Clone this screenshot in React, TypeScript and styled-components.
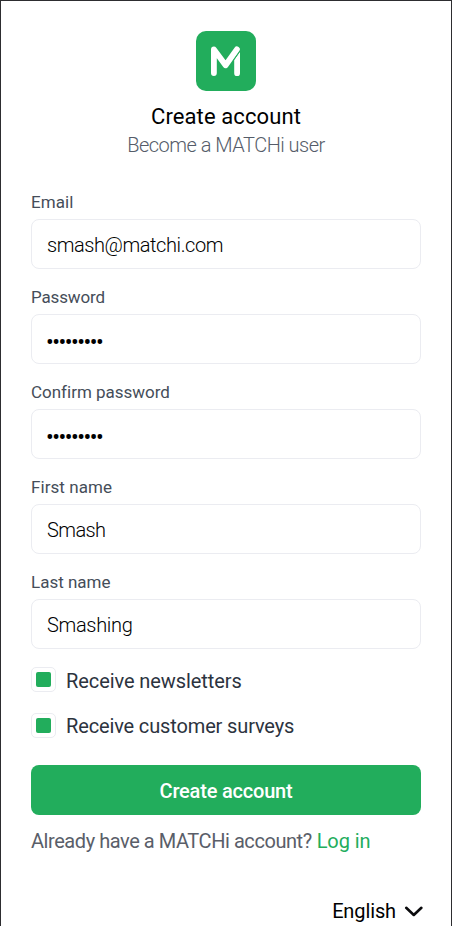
import React, { useState } from 'react';
import styled, { createGlobalStyle } from 'styled-components';

const GlobalStyle = createGlobalStyle`
  *, *::before, *::after { box-sizing: border-box; }
  html, body { margin: 0; padding: 0; overflow: hidden; }
  body { background: #fff; font-family: Roboto, "Liberation Sans", sans-serif; }
`;

const Page = styled.main`
  display: flex;
  flex-direction: column;
  width: 452px;
  height: 926px;
  padding: 30px 30px 0;
  border: 1px solid #2d2d30;
  border-bottom: 0;
  background: #fff;
`;

const Header = styled.header`
  display: flex;
  flex-direction: column;
  align-items: center;
  margin-bottom: 31px;
`;

const Logo = styled.svg`
  display: block;
  width: 60px;
  height: 60px;
  margin-bottom: 11px;
`;

const Title = styled.h1`
  margin: 0 0 -1px;
  font-size: 22px;
  font-weight: 400;
  line-height: 30px;
  letter-spacing: 0.1px;
  color: #000;
`;

const Subtitle = styled.p`
  margin: 0;
  font-size: 20px;
  font-weight: 300;
  line-height: 28px;
  letter-spacing: -0.51px;
  color: #555c69;
`;

const Form = styled.form`
  display: flex;
  flex-direction: column;
`;

const Fields = styled.div`
  display: flex;
  flex-direction: column;
  gap: 16px;
`;

const Field = styled.label`
  display: flex;
  flex-direction: column;
  gap: 5px;
`;

const FieldLabel = styled.span<{ $tracking: number }>`
  font-size: 17px;
  line-height: 24px;
  letter-spacing: ${p => p.$tracking}px;
  color: #454d59;
`;

const Input = styled.input<{ $tracking: number }>`
  width: 100%;
  height: 50px;
  padding: 2px 15px 0;
  border: 1px solid #ebecf1;
  border-radius: 8px;
  outline: none;
  background: #fff;
  color: #000;
  font-family: inherit;
  font-size: 20px;
  font-weight: 300;
  letter-spacing: ${p => p.$tracking}px;

  &[type='password'] {
    padding-top: 7px;
    padding-left: 14px;
    font-size: 23px;
    font-weight: 400;
  }
`;

const Checks = styled.div`
  display: flex;
  flex-direction: column;
  gap: 21px;
  margin: 18px 0 27px;
`;

const CheckRow = styled.label`
  display: flex;
  align-items: flex-start;
  gap: 10px;
  height: 25px;
`;

const CheckBox = styled.input`
  appearance: none;
  display: grid;
  place-items: center;
  width: 25px;
  height: 25px;
  margin: 0;
  border: 1px solid #ebecf1;
  border-radius: 5px;
  background: #fff;

  &:checked::before {
    content: '';
    width: 15px;
    height: 15px;
    border-radius: 2px;
    background: #22ad5c;
  }
`;

const CheckLabel = styled.span<{ $tracking: number; $drop: number }>`
  padding-top: ${p => p.$drop}px;
  font-size: 20px;
  line-height: 25px;
  letter-spacing: ${p => p.$tracking}px;
  color: #2c333e;
`;

const Submit = styled.button`
  height: 50px;
  padding: 2px 0 0;
  border: 0;
  border-radius: 8px;
  background: #22ad5c;
  color: #fff;
  font-family: inherit;
  font-size: 20px;
  font-weight: 500;
  letter-spacing: -0.2px;
`;

const LoginLine = styled.p`
  display: flex;
  gap: 5px;
  margin: 12px 0 42px;
  font-size: 20px;
  line-height: 28px;
  letter-spacing: -0.44px;
  color: #5a5e69;
`;

const LoginLink = styled.a`
  letter-spacing: -0.1px;
  color: #22ad5c;
`;

const Language = styled.button`
  display: flex;
  align-items: center;
  align-self: flex-end;
  gap: 8px;
  height: 28px;
  margin-right: -3px;
  padding: 0;
  border: 0;
  background: none;
  color: #000;
  font-family: inherit;
  font-size: 20px;
  line-height: 28px;
  letter-spacing: -0.12px;
`;

const Chevron = styled.svg`
  display: block;
  width: 20px;
  height: 20px;
`;

const fields = [
  { label: 'Email', type: 'text', value: 'smash@matchi.com', labelTracking: 0.1, tracking: -0.42 },
  { label: 'Password', type: 'password', value: 'smashing1', labelTracking: -0.16, tracking: -1.5 },
  { label: 'Confirm password', type: 'password', value: 'smashing1', labelTracking: -0.01, tracking: -1.5 },
  { label: 'First name', type: 'text', value: 'Smash', labelTracking: 0.07, tracking: -0.6 },
  { label: 'Last name', type: 'text', value: 'Smashing', labelTracking: 0, tracking: -0.32 },
];

const checks = [
  { label: 'Receive newsletters', tracking: -0.08, drop: 2 },
  { label: 'Receive customer surveys', tracking: -0.14, drop: 1 },
];

function TextField({ field }: { field: (typeof fields)[number] }) {
  const [value, setValue] = useState(field.value);
  return (
    <Field>
      <FieldLabel $tracking={field.labelTracking}>{field.label}</FieldLabel>
      <Input
        type={field.type}
        value={value}
        onChange={e => setValue(e.target.value)}
        spellCheck={false}
        $tracking={field.tracking}
      />
    </Field>
  );
}

export default function App() {
  return (
    <>
      <GlobalStyle />
      <Page>
        <Header>
          <Logo viewBox="0 0 60 60" aria-hidden="true">
            <rect width="60" height="60" rx="10" fill="#22ad5c" />
            <path
              d="M17.9 42.1V18.4L29.6 34.3L40.9 18.4"
              fill="none"
              stroke="#fff"
              strokeWidth="5.8"
              strokeLinecap="round"
              strokeLinejoin="round"
            />
            <path d="M44 20.8V42.2a2.9 2.9 0 0 1-5.8 0V29Z" fill="#fff" />
            <path d="M44.6 19.3L37.4 29.4" stroke="#22ad5c" strokeWidth="0.8" />
          </Logo>
          <Title>Create account</Title>
          <Subtitle>Become a MATCHi user</Subtitle>
        </Header>
        <Form onSubmit={e => e.preventDefault()}>
          <Fields>
            {fields.map(field => (
              <TextField key={field.label} field={field} />
            ))}
          </Fields>
          <Checks>
            {checks.map(check => (
              <CheckRow key={check.label}>
                <CheckBox type="checkbox" defaultChecked />
                <CheckLabel $tracking={check.tracking} $drop={check.drop}>
                  {check.label}
                </CheckLabel>
              </CheckRow>
            ))}
          </Checks>
          <Submit type="submit">Create account</Submit>
        </Form>
        <LoginLine>
          Already have a MATCHi account?
          <LoginLink>Log in</LoginLink>
        </LoginLine>
        <Language type="button">
          English
          <Chevron viewBox="0 0 20 20" aria-hidden="true">
            <path
              d="M2.2 6.8L9.8 14L17.4 6.8"
              fill="none"
              stroke="#0b0b0d"
              strokeWidth="2.6"
              strokeLinecap="round"
              strokeLinejoin="round"
            />
          </Chevron>
        </Language>
      </Page>
    </>
  );
}
